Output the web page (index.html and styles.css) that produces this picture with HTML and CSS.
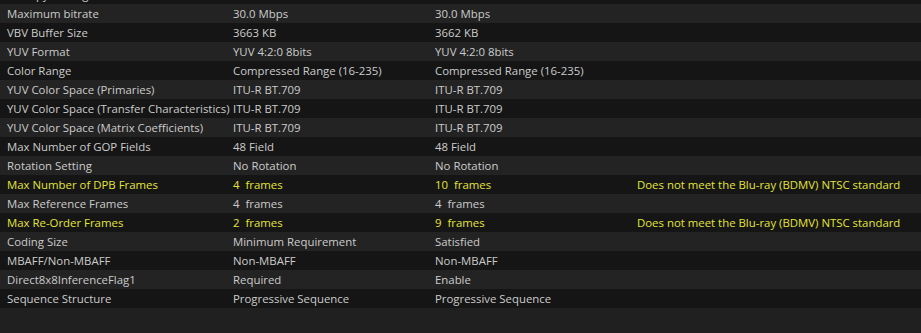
FILE: index.html
```html
<!DOCTYPE html>
<html>
	<head>
		<meta charset="UTF-8">
		<title>Stream Check</title>
		<link rel="stylesheet" href="styles.css">
	</head>
	<body>
		<div class="panel">
			<div class="list">
				<div class="row"><span>Entropy Coding</span><span>CABAC</span><span>CABAC</span><span></span></div>
				<div class="row"><span>Maximum bitrate</span><span>30.0 Mbps</span><span>30.0 Mbps</span><span></span></div>
				<div class="row"><span>VBV Buffer Size</span><span>3663 KB</span><span>3662 KB</span><span></span></div>
				<div class="row"><span>YUV Format</span><span>YUV 4:2:0 8bits</span><span>YUV 4:2:0 8bits</span><span></span></div>
				<div class="row"><span>Color Range</span><span>Compressed Range (16-235)</span><span>Compressed Range (16-235)</span><span></span></div>
				<div class="row"><span>YUV Color Space (Primaries)</span><span>ITU-R BT.709</span><span>ITU-R BT.709</span><span></span></div>
				<div class="row"><span>YUV Color Space (Transfer Characteristics)</span><span>ITU-R BT.709</span><span>ITU-R BT.709</span><span></span></div>
				<div class="row"><span>YUV Color Space (Matrix Coefficients)</span><span>ITU-R BT.709</span><span>ITU-R BT.709</span><span></span></div>
				<div class="row"><span>Max Number of GOP Fields</span><span>48 Field</span><span>48 Field</span><span></span></div>
				<div class="row"><span>Rotation Setting</span><span>No Rotation</span><span>No Rotation</span><span></span></div>
				<div class="row warn"><span>Max Number of DPB Frames</span><span>4&nbsp; frames</span><span>10&nbsp; frames</span><span>Does not meet the Blu-ray (BDMV) NTSC standard</span></div>
				<div class="row"><span>Max Reference Frames</span><span>4&nbsp; frames</span><span>4&nbsp; frames</span><span></span></div>
				<div class="row warn"><span>Max Re-Order Frames</span><span>2&nbsp; frames</span><span>9&nbsp; frames</span><span>Does not meet the Blu-ray (BDMV) NTSC standard</span></div>
				<div class="row"><span>Coding Size</span><span>Minimum Requirement</span><span>Satisfied</span><span></span></div>
				<div class="row"><span>MBAFF/Non-MBAFF</span><span>Non-MBAFF</span><span>Non-MBAFF</span><span></span></div>
				<div class="row"><span>Direct8x8InferenceFlag1</span><span>Required</span><span>Enable</span><span></span></div>
				<div class="row"><span>Sequence Structure</span><span>Progressive Sequence</span><span>Progressive Sequence</span><span></span></div>
			</div>
		</div>
	</body>
</html>
```

FILE: styles.css
```css
*{margin: 0;padding: 0;box-sizing: border-box;}
html,body{height: 100%;}
body{background: #202020;overflow: hidden;font-family: "Open Sans", "Noto Sans", sans-serif;font-size: 11.4px;color: #cbcbcb;}
.panel{height: 100%;overflow: hidden;}
/* list is scrolled down a little, first row only shows its bottom edge */
.list{margin-top: -15px;}
.row{display: grid;grid-template-columns: 226px 202px 202px 1fr;height: 19px;line-height: 19px;padding-left: 7px;white-space: nowrap;}
.row:nth-child(odd){background: #151515;}
.row:nth-child(even){background: #232323;}
.warn{color: #e4e437;}
```
